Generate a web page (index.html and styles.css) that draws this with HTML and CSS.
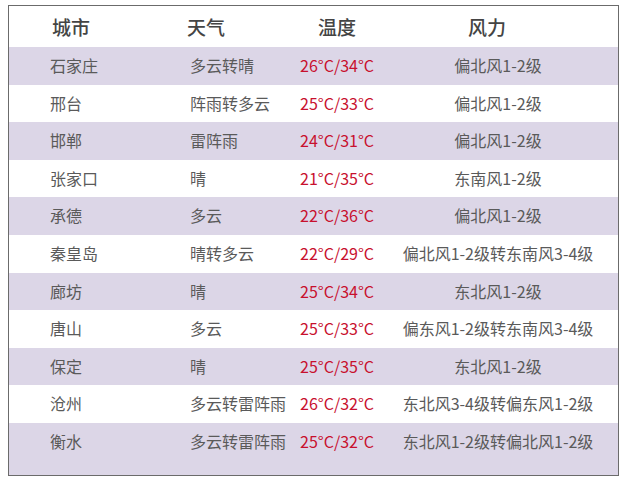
FILE: index.html
```html
<!DOCTYPE html>
<html lang="zh-CN">
<head>
<meta charset="utf-8">
<link rel="stylesheet" href="styles.css">
</head>
<body>
<div class="table">
  <div class="row head">
    <div class="c1">城市</div><div class="c2">天气</div><div class="c3">温度</div><div class="c4">风力</div>
  </div>
  <div class="row alt"><div class="c1">石家庄</div><div class="c2">多云转晴</div><div class="c3">26°C/34°C</div><div class="c4">偏北风1-2级</div></div>
  <div class="row"><div class="c1">邢台</div><div class="c2">阵雨转多云</div><div class="c3">25°C/33°C</div><div class="c4">偏北风1-2级</div></div>
  <div class="row alt"><div class="c1">邯郸</div><div class="c2">雷阵雨</div><div class="c3">24°C/31°C</div><div class="c4">偏北风1-2级</div></div>
  <div class="row"><div class="c1">张家口</div><div class="c2">晴</div><div class="c3">21°C/35°C</div><div class="c4">东南风1-2级</div></div>
  <div class="row alt"><div class="c1">承德</div><div class="c2">多云</div><div class="c3">22°C/36°C</div><div class="c4">偏北风1-2级</div></div>
  <div class="row"><div class="c1">秦皇岛</div><div class="c2">晴转多云</div><div class="c3">22°C/29°C</div><div class="c4">偏北风1-2级转东南风3-4级</div></div>
  <div class="row alt"><div class="c1">廊坊</div><div class="c2">晴</div><div class="c3">25°C/34°C</div><div class="c4">东北风1-2级</div></div>
  <div class="row"><div class="c1">唐山</div><div class="c2">多云</div><div class="c3">25°C/33°C</div><div class="c4">偏东风1-2级转东南风3-4级</div></div>
  <div class="row alt"><div class="c1">保定</div><div class="c2">晴</div><div class="c3">25°C/35°C</div><div class="c4">东北风1-2级</div></div>
  <div class="row"><div class="c1">沧州</div><div class="c2">多云转雷阵雨</div><div class="c3">26°C/32°C</div><div class="c4">东北风3-4级转偏东风1-2级</div></div>
  <div class="row alt last"><div class="c1">衡水</div><div class="c2">多云转雷阵雨</div><div class="c3">25°C/32°C</div><div class="c4">东北风1-2级转偏北风1-2级</div></div>
</div>
</body>
</html>
```

FILE: styles.css
```css
html, body {
  margin: 0;
  padding: 0;
  background: #ffffff;
}
body {
  padding: 5px 0 0 8px;
  font-family: "Noto Sans CJK SC", "Liberation Sans", sans-serif;
  font-size: 16px;
  color: #5a5a5a;
}
.table {
  width: 611px;
  box-sizing: border-box;
  border: 1px solid #6b6b6b;
  background: #fff;
}
.row {
  display: flex;
  align-items: flex-start;
  height: 37.6px;
  line-height: 36px;
  white-space: nowrap;
}
.row.alt {
  background: #dcd6e7;
}
.row.last {
  height: 52px;
}
.row.head {
  height: 41px;
  line-height: 41px;
  font-size: 19px;
  font-weight: 500;
  color: #444444;
}
.c1 { width: 170px; padding-left: 41px; box-sizing: border-box; }
.c2 { width: 112px; padding-left: 11px; box-sizing: border-box; }
.c3 { width: 87px; padding-left: 9px; box-sizing: border-box; color: #c8102e; }
.c4 { width: 240px; text-align: center; box-sizing: border-box; }
.head .c1 { padding-left: 43px; }
.head .c2 { padding-left: 8px; }
.head .c3 { padding-left: 27px; color: #444444; }
.head .c4 { text-align: left; padding-left: 90px; }
```
